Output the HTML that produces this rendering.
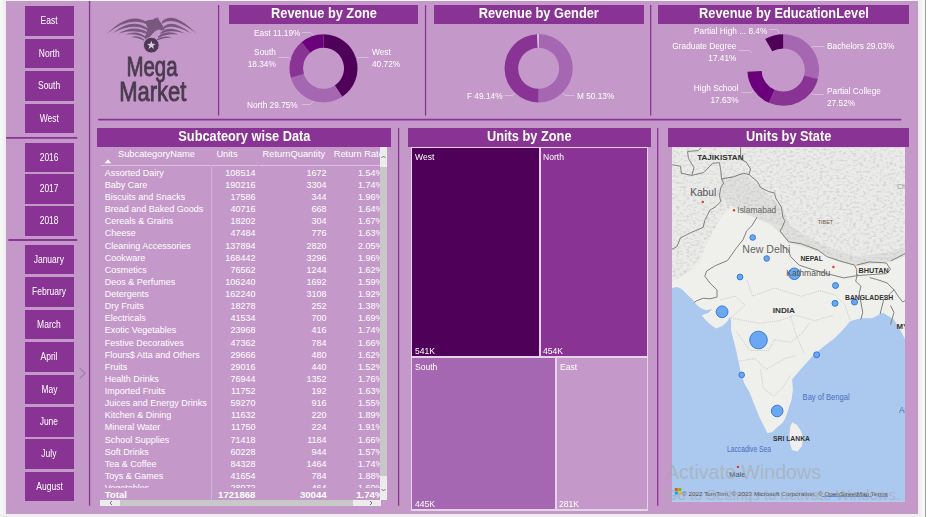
<!DOCTYPE html>
<html><head><meta charset="utf-8">
<style>
*{margin:0;padding:0;box-sizing:border-box}
html,body{width:931px;height:517px;overflow:hidden;background:#f4f5f2;font-family:"Liberation Sans",sans-serif}
.a{position:absolute}
#shadowL{left:0;top:0;width:6px;height:517px;background:linear-gradient(to right,#fafafa,#ececec)}
#shadowB{left:0;top:514px;width:931px;height:3px;background:#efefef}
#bg{left:6px;top:1px;width:912px;height:513px;background:#c499c9}
#rstrip{left:918px;top:0;width:7px;height:517px;background:linear-gradient(to right,#ececec,#fafafa)}
#rline{left:925px;top:0;width:1px;height:517px;background:#a0a0a0}
.btn{position:absolute;left:24.6px;width:49px;height:29.6px;background:#893494;color:#fff;font-size:10px;text-align:center;line-height:29px;white-space:nowrap}
.btn span{display:inline-block;transform:scaleX(.85)}
.ttl{position:absolute;background:#893494;color:#fff;font-weight:bold;font-size:14px;text-align:center;height:19px;line-height:16px}
.ttl span{display:inline-block;transform:scaleX(.913)}
.lbl{position:absolute;color:#fff;font-size:9.4px;white-space:nowrap;line-height:12.5px;transform:scaleX(.885);transform-origin:0 0}
.lbl.r{text-align:right;transform-origin:100% 0}

.tr{position:absolute;left:0;width:300px;height:12px;line-height:12px;font-size:9px;color:#fff;white-space:nowrap}
.tr span{position:absolute;top:0}
.c0{left:7.7px}
.c1{right:141.6px}
.c2{right:70.4px}
.c3{right:13.6px}
.th{position:absolute;font-size:9.3px;color:#fff;white-space:nowrap;line-height:12px}

.tm{position:absolute}
.tml{position:absolute;color:#fff;font-size:9.5px;line-height:12px;white-space:nowrap;transform:scaleX(.9);transform-origin:0 0}
</style></head><body>
<div class="a" id="shadowL"></div>
<div class="a" id="bg"></div>
<div class="a" id="shadowB"></div>
<div class="a" id="rstrip"></div>
<div class="a" id="rline"></div>
<div class="a" style="left:926px;top:0;width:5px;height:517px;background:#fff"></div>

<!-- left slicers -->
<div class="btn" style="top:6.1px"><span>East</span></div>
<div class="btn" style="top:38.9px"><span>North</span></div>
<div class="btn" style="top:71.2px"><span>South</span></div>
<div class="btn" style="top:103.7px"><span>West</span></div>
<div class="btn" style="top:142.6px"><span>2016</span></div>
<div class="btn" style="top:174.3px"><span>2017</span></div>
<div class="btn" style="top:206.1px"><span>2018</span></div>
<div class="btn" style="top:244.6px"><span>January</span></div>
<div class="btn" style="top:277.3px"><span>February</span></div>
<div class="btn" style="top:309.7px"><span>March</span></div>
<div class="btn" style="top:342.2px"><span>April</span></div>
<div class="btn" style="top:374.6px"><span>May</span></div>
<div class="btn" style="top:407px"><span>June</span></div>
<div class="btn" style="top:439.4px"><span>July</span></div>
<div class="btn" style="top:471.6px"><span>August</span></div>


<!-- lines -->
<svg class="a" style="left:0;top:0" width="931" height="517">
<g stroke="#893494" stroke-width="1.3">
<line x1="89.55" y1="1" x2="89.55" y2="505.8"/>
<line x1="218.6" y1="5" x2="218.6" y2="115.6"/>
<line x1="425.55" y1="5" x2="425.55" y2="115.6"/>
<line x1="650.7" y1="5" x2="650.7" y2="115.6"/>
<line x1="398.6" y1="128" x2="398.6" y2="505.7"/>
<line x1="657.7" y1="128" x2="657.7" y2="505.7"/>
</g>
<g stroke="#893494" stroke-width="1.8" stroke-linecap="round">
<line x1="6.9" y1="137.85" x2="76.6" y2="137.85"/>
<line x1="9" y1="240" x2="76.6" y2="240"/>
<line x1="98.8" y1="119.6" x2="900.5" y2="119.6"/>
</g>
<polyline points="79.6,368.1 85.2,373.3 79.6,378.6" fill="none" stroke="#7a7690" stroke-width="1"/>
</svg>


<!-- titles -->
<div class="ttl" style="left:229px;top:5px;width:189px"><span>Revenue by Zone</span></div>
<div class="ttl" style="left:434px;top:5px;width:210px"><span>Revenue by Gender</span></div>
<div class="ttl" style="left:658px;top:5px;width:251px"><span>Revenue by EducationLevel</span></div>

<div class="ttl" style="left:97px;top:128px;width:294px"><span>Subcateory wise Data</span></div>
<div class="ttl" style="left:408px;top:128px;width:243px"><span>Units by Zone</span></div>
<div class="ttl" style="left:668px;top:128px;width:241px"><span>Units by State</span></div>



<svg class="a" style="left:0;top:0" width="931" height="517" viewBox="0 0 931 517">
<path d="M323.50,34.30 A34,34 0 0 1 342.22,96.68 L334.79,85.41 A20.5,20.5 0 0 0 323.50,47.80Z" fill="#4f0058"/>
<path d="M342.22,96.68 A34,34 0 0 1 290.87,77.85 L303.82,74.06 A20.5,20.5 0 0 0 334.79,85.41Z" fill="#a567b1"/>
<path d="M290.87,77.85 A34,34 0 0 1 301.52,42.36 L310.25,52.66 A20.5,20.5 0 0 0 303.82,74.06Z" fill="#893494"/>
<path d="M301.52,42.36 A34,34 0 0 1 323.50,34.30 L323.50,47.80 A20.5,20.5 0 0 0 310.25,52.66Z" fill="#6a017a"/>
<path d="M538.70,34.10 A34.2,34.2 0 1 1 538.42,102.50 L538.53,88.80 A20.5,20.5 0 1 0 538.70,47.80Z" fill="#a567b1"/>
<path d="M538.42,102.50 A34.2,34.2 0 0 1 537.13,34.14 L537.76,47.82 A20.5,20.5 0 0 0 538.53,88.80Z" fill="#893494"/>
<path d="M537.13,34.14 A34.2,34.2 0 0 1 538.70,34.10 L538.70,47.80 A20.5,20.5 0 0 0 537.76,47.82Z" fill="#e2cfe6"/>
<path d="M783.20,34.20 A35.8,35.8 0 0 1 817.86,78.97 L804.11,75.41 A21.6,21.6 0 0 0 783.20,48.40Z" fill="#a567b1"/>
<path d="M817.86,78.97 A35.8,35.8 0 0 1 768.88,102.81 L774.56,89.80 A21.6,21.6 0 0 0 804.11,75.41Z" fill="#893494"/>
<path d="M768.88,102.81 A35.8,35.8 0 0 1 747.45,71.84 L761.63,71.11 A21.6,21.6 0 0 0 774.56,89.80Z" fill="#6a017a"/>
<path d="M765.15,39.08 A35.8,35.8 0 0 1 783.18,34.20 L783.19,48.40 A21.6,21.6 0 0 0 772.31,51.35Z" fill="#4f0058"/>

<g stroke="#d6bcdb" stroke-width="1" fill="none">
<polyline points="302,32.5 310.5,32.5 313,35"/>
<polyline points="278,57.5 289,57.5 291,59.5"/>
<polyline points="368.5,57.5 357.5,57.5"/>
<polyline points="302,104.5 310.5,104.5 313,101.5"/>
<polyline points="503.5,95.5 512.5,95.5 514.5,93"/>
<polyline points="574.5,95.5 565,95.5 563,93"/>
<polyline points="769,29.5 777.5,29.5 779,33"/>
<polyline points="738.5,50.5 750,50.5 752,53"/>
<polyline points="741.5,92.5 751.5,92.5 753,91"/>
<polyline points="824,46.5 812.5,46.5 811,48"/>
<polyline points="824,94.5 812.5,94.5 811,93"/>
</g>
</svg>

<div class="lbl" style="left:254px;top:26.6px">East 11.19%</div>
<div class="lbl r" style="right:655px;top:45.5px;text-align:right">South<br>18.34%</div>
<div class="lbl" style="left:371.5px;top:45.5px">West<br>40.72%</div>
<div class="lbl" style="left:247.3px;top:98.6px">North 29.75%</div>
<div class="lbl" style="left:466.5px;top:90.3px">F 49.14%</div>
<div class="lbl" style="left:577.4px;top:90.3px">M 50.13%</div>
<div class="lbl" style="left:694.4px;top:24.5px">Partial High ... 8.4%</div>
<div class="lbl r" style="right:194.6px;top:39.8px;text-align:right">Graduate Degree<br>17.41%</div>
<div class="lbl r" style="right:192.5px;top:81.6px;text-align:right">High School<br>17.63%</div>
<div class="lbl" style="left:826.9px;top:39.8px">Bachelors 29.03%</div>
<div class="lbl" style="left:826.9px;top:84.8px">Partial College<br>27.52%</div>
<div class="a" style="left:97px;top:147px;width:283px;height:341px;overflow:hidden">
<div class="tr" style="top:19.88px"><span class="c0">Assorted Dairy</span><span class="c1">108514</span><span class="c2">1672</span><span class="c3">1.54%</span></div>
<div class="tr" style="top:32.00px"><span class="c0">Baby Care</span><span class="c1">190216</span><span class="c2">3304</span><span class="c3">1.74%</span></div>
<div class="tr" style="top:44.12px"><span class="c0">Biscuits and Snacks</span><span class="c1">17586</span><span class="c2">344</span><span class="c3">1.96%</span></div>
<div class="tr" style="top:56.24px"><span class="c0">Bread and Baked Goods</span><span class="c1">40716</span><span class="c2">668</span><span class="c3">1.64%</span></div>
<div class="tr" style="top:68.36px"><span class="c0">Cereals &amp; Grains</span><span class="c1">18202</span><span class="c2">304</span><span class="c3">1.67%</span></div>
<div class="tr" style="top:80.48px"><span class="c0">Cheese</span><span class="c1">47484</span><span class="c2">776</span><span class="c3">1.63%</span></div>
<div class="tr" style="top:92.60px"><span class="c0">Cleaning Accessories</span><span class="c1">137894</span><span class="c2">2820</span><span class="c3">2.05%</span></div>
<div class="tr" style="top:104.72px"><span class="c0">Cookware</span><span class="c1">168442</span><span class="c2">3296</span><span class="c3">1.96%</span></div>
<div class="tr" style="top:116.84px"><span class="c0">Cosmetics</span><span class="c1">76562</span><span class="c2">1244</span><span class="c3">1.62%</span></div>
<div class="tr" style="top:128.96px"><span class="c0">Deos &amp; Perfumes</span><span class="c1">106240</span><span class="c2">1692</span><span class="c3">1.59%</span></div>
<div class="tr" style="top:141.08px"><span class="c0">Detergents</span><span class="c1">162240</span><span class="c2">3108</span><span class="c3">1.92%</span></div>
<div class="tr" style="top:153.20px"><span class="c0">Dry Fruits</span><span class="c1">18278</span><span class="c2">252</span><span class="c3">1.38%</span></div>
<div class="tr" style="top:165.32px"><span class="c0">Electricals</span><span class="c1">41534</span><span class="c2">700</span><span class="c3">1.69%</span></div>
<div class="tr" style="top:177.44px"><span class="c0">Exotic Vegetables</span><span class="c1">23968</span><span class="c2">416</span><span class="c3">1.74%</span></div>
<div class="tr" style="top:189.56px"><span class="c0">Festive Decoratives</span><span class="c1">47362</span><span class="c2">784</span><span class="c3">1.66%</span></div>
<div class="tr" style="top:201.68px"><span class="c0">Flours$ Atta and Others</span><span class="c1">29666</span><span class="c2">480</span><span class="c3">1.62%</span></div>
<div class="tr" style="top:213.80px"><span class="c0">Fruits</span><span class="c1">29016</span><span class="c2">440</span><span class="c3">1.52%</span></div>
<div class="tr" style="top:225.92px"><span class="c0">Health Drinks</span><span class="c1">76944</span><span class="c2">1352</span><span class="c3">1.76%</span></div>
<div class="tr" style="top:238.04px"><span class="c0">Imported Fruits</span><span class="c1">11752</span><span class="c2">192</span><span class="c3">1.63%</span></div>
<div class="tr" style="top:250.16px"><span class="c0">Juices and Energy Drinks</span><span class="c1">59270</span><span class="c2">916</span><span class="c3">1.55%</span></div>
<div class="tr" style="top:262.28px"><span class="c0">Kitchen &amp; Dining</span><span class="c1">11632</span><span class="c2">220</span><span class="c3">1.89%</span></div>
<div class="tr" style="top:274.40px"><span class="c0">Mineral Water</span><span class="c1">11750</span><span class="c2">224</span><span class="c3">1.91%</span></div>
<div class="tr" style="top:286.52px"><span class="c0">School Supplies</span><span class="c1">71418</span><span class="c2">1184</span><span class="c3">1.66%</span></div>
<div class="tr" style="top:298.64px"><span class="c0">Soft Drinks</span><span class="c1">60228</span><span class="c2">944</span><span class="c3">1.57%</span></div>
<div class="tr" style="top:310.76px"><span class="c0">Tea &amp; Coffee</span><span class="c1">84328</span><span class="c2">1464</span><span class="c3">1.74%</span></div>
<div class="tr" style="top:322.88px"><span class="c0">Toys &amp; Games</span><span class="c1">41654</span><span class="c2">784</span><span class="c3">1.88%</span></div>
<div class="tr" style="top:335.00px"><span class="c0">Vegetables</span><span class="c1">28072</span><span class="c2">464</span><span class="c3">1.60%</span></div>
</div>
<div class="th" style="left:118px;top:148px">SubcategoryName</div>
<div class="th" style="left:216.4px;top:148px">Units</div>
<div class="th" style="left:262.6px;top:148px">ReturnQuantity</div>
<div class="a" style="left:333.7px;top:147px;width:46.4px;height:14px;overflow:hidden"><div class="th" style="left:0;top:1px">Return Rate</div></div>
<svg class="a" style="left:104px;top:159px" width="8" height="5"><polygon points="0.7,4.3 7.2,4.3 3.95,0.6" fill="#fff"/></svg>
<div class="a" style="left:101px;top:165px;width:110px;height:1px;background:#dcc3e0"></div><div class="a" style="left:212px;top:165px;width:46px;height:1px;background:#dcc3e0"></div>
<div class="a" style="left:259px;top:165px;width:121px;height:1px;background:#dcc3e0"></div>
<div class="a" style="left:211px;top:166px;width:1px;height:334px;background:#d2b3d8"></div>
<div class="a" style="left:97px;top:487.7px;width:283px;height:12px;overflow:hidden"><div class="tr" style="top:1.1px;font-weight:bold;font-size:9.6px"><span class="c0">Total</span><span class="c1">1721868</span><span class="c2">30044</span><span class="c3">1.74%</span></div></div>
<!-- scrollbars -->
<div class="a" style="left:380px;top:147px;width:7px;height:353px;background:#ececec"></div>
<div class="a" style="left:380px;top:166.5px;width:7px;height:309px;background:#c8c8c8"></div>
<div class="a" style="left:100px;top:500px;width:280.7px;height:6px;background:#ececec"></div>
<div class="a" style="left:119.5px;top:500px;width:233px;height:6px;background:#c8c8c8"></div>
<svg class="a" style="left:380px;top:147px" width="7" height="353">
<polyline points="1.5,11 3.5,9 5.5,11" fill="none" stroke="#555" stroke-width="0.8"/>
<polyline points="1.5,342 3.5,344 5.5,342" fill="none" stroke="#555" stroke-width="0.8"/>
</svg>
<svg class="a" style="left:100px;top:500px" width="281" height="6">
<polyline points="12,1 10,3 12,5" fill="none" stroke="#555" stroke-width="0.8"/>
<polyline points="270,1 272,3 270,5" fill="none" stroke="#555" stroke-width="0.8"/>
</svg>

<!-- treemap -->
<div class="a" style="left:411px;top:147px;width:237px;height:364px;background:#e6d3e9"></div>
<div class="tm" style="left:412px;top:148px;width:127px;height:208px;background:#4f0058"></div>
<div class="tm" style="left:540.6px;top:148px;width:106.4px;height:208px;background:#893494"></div>
<div class="tm" style="left:412px;top:358px;width:142.8px;height:151.3px;background:#a567b1"></div>
<div class="tm" style="left:556.8px;top:358px;width:90.2px;height:151.3px;background:#c499c9"></div>
<div class="tml" style="left:415px;top:150.8px">West</div>
<div class="tml" style="left:415px;top:344.8px">541K</div>
<div class="tml" style="left:543.3px;top:150.8px">North</div>
<div class="tml" style="left:543.3px;top:344.8px">454K</div>
<div class="tml" style="left:415px;top:360.6px">South</div>
<div class="tml" style="left:415px;top:497.6px">445K</div>
<div class="tml" style="left:560.2px;top:360.6px">East</div>
<div class="tml" style="left:559.4px;top:497.6px">281K</div>

<!-- logo -->
<svg class="a" style="left:100px;top:10px" width="105" height="50" viewBox="0 0 105 50">
<g fill="#79587f"><path d="M6.8,23.9 Q30.0,0.0 48.5,13.0 L48.5,15.2 Q30.0,5.2 6.8,23.9Z"/>
<path d="M12.4,23.3 Q32.0,7.4 47.4,18.2 L47.4,20.2 Q32.0,12.0 12.4,23.3Z"/>
<path d="M18.6,23.5 Q34.0,14.4 47.4,22.2 L47.4,24.0 Q34.0,18.6 18.6,23.5Z"/>
<path d="M25.4,24.6 Q37.0,19.2 46.0,27.0 L46.0,28.6 Q37.0,23.0 25.4,24.6Z"/>
<path d="M31.0,27.2 Q38.0,24.5 44.0,29.5 L44.0,30.7 Q38.0,27.3 31.0,27.2Z"/>
<path d="M96.8,23.9 Q73.0,0.0 62.0,11.5 L62.0,13.7 Q73.0,5.2 96.8,23.9Z"/>
<path d="M91.0,23.3 Q71.0,7.4 62.5,18.0 L62.5,20.0 Q71.0,12.0 91.0,23.3Z"/>
<path d="M85.0,23.5 Q69.0,14.4 60.5,22.5 L60.5,24.3 Q69.0,18.6 85.0,23.5Z"/>
<path d="M78.5,24.6 Q67.0,19.2 58.0,26.5 L58.0,28.1 Q67.0,23.0 78.5,24.6Z"/>
<path d="M72.0,27.5 Q64.0,24.8 56.0,29.5 L56.0,30.7 Q64.0,27.6 72.0,27.5Z"/>
<path d="M44,11.5 L49,10 L53,9.6 L56,7.6 L57,8.8 L57.8,7.1 L59,10 L61.5,13.5 L63.5,17 L64.7,19.8 L62,20.6 L58.5,19.6 L55,21.2 L52,24.2 L49,28 L46.5,30.5 L44.5,27.5 L46.5,23 L47.5,18 L46,14 Z"/>
</g>
<circle cx="51.3" cy="35.2" r="7.9" fill="#4e3954" stroke="#c499c9" stroke-width="1"/>
<polygon points="51.3,30.8 52.4,33.8 55.5,33.9 53.1,35.8 54,38.9 51.3,37.1 48.6,38.9 49.5,35.8 47.1,33.9 50.2,33.8" fill="#dccbe0"/>
</svg>
<div class="a" style="left:107px;top:53.3px;width:90px;text-align:center;font-size:28px;line-height:27px;color:#4b3a50;white-space:nowrap;-webkit-text-stroke:0.9px #4b3a50"><span style="display:inline-block;transform:scaleX(.73)">Mega</span></div>
<div class="a" style="left:107.5px;top:77.8px;width:90px;text-align:center;font-size:28px;line-height:27px;color:#4b3a50;white-space:nowrap;-webkit-text-stroke:0.9px #4b3a50"><span style="display:inline-block;transform:scaleX(.785)">Market</span></div>
<!-- map -->
<svg class="a" style="left:0;top:0" width="931" height="517" viewBox="0 0 931 517">
<defs><clipPath id="mc"><rect x="672" y="147.4" width="233" height="354.4"/></clipPath></defs>
<g clip-path="url(#mc)">
<rect x="671" y="147" width="235" height="356" fill="#efefec"/>
<polygon points="671.0,147.0 906.0,147.0 906.0,253.0 890.6,260.9 869.4,261.9 856.6,265.1 839.6,260.9 818.3,250.2 801.3,243.8 788.5,241.7 780.0,231.0 770.0,222.0 757.1,217.0 746.0,212.0 735.0,205.0 722.0,215.0 706.0,245.0 700.0,262.0 690.0,272.0 672.0,282.0" fill="#ebebe9"/>
<polygon points="721.5,178.9 743.4,173.2 760.4,187.4 781.5,207.1 790.0,225.0 805.0,235.0 830.0,248.0 856.0,257.0 890.0,252.0 906.0,247.0 906.0,256.0 890.6,262.0 856.6,266.0 839.6,262.0 818.3,252.0 801.3,246.0 788.5,243.0 780.0,233.0 770.0,224.0 757.0,219.0 744.0,213.0 730.0,205.0 720.0,195.0" fill="#e0e0de"/>
<filter id="tx" x="0" y="0" width="100%" height="100%"><feTurbulence type="fractalNoise" baseFrequency="0.3 0.45" numOctaves="2" seed="7"/><feColorMatrix type="matrix" values="0 0 0 0 0.4  0 0 0 0 0.4  0 0 0 0 0.4  0 0 0 -3 1.6"/></filter>
<clipPath id="mtnc"><polygon points="671.0,147.0 906.0,147.0 906.0,253.0 890.6,260.9 869.4,261.9 856.6,265.1 839.6,260.9 818.3,250.2 801.3,243.8 788.5,241.7 780.0,231.0 770.0,222.0 757.1,217.0 746.0,212.0 735.0,205.0 722.0,215.0 706.0,245.0 700.0,262.0 690.0,272.0 672.0,282.0"/></clipPath>
<rect x="671" y="147" width="235" height="140" filter="url(#tx)" clip-path="url(#mtnc)" opacity="0.35"/>
<polygon points="671.0,288.2 677.0,286.9 681.4,288.8 684.6,292.0 688.4,295.7 692.1,298.9 694.6,302.6 697.2,305.2 700.9,308.3 706.0,310.2 712.3,308.9 708.5,312.7 701.6,315.2 704.7,319.0 709.7,324.0 716.0,328.4 722.3,325.9 727.3,321.5 729.9,316.5 731.1,321.5 731.1,330.3 733.0,337.9 734.9,345.0 736.7,353.0 740.4,370.6 744.2,383.2 749.4,392.0 754.2,404.2 759.0,416.3 763.9,426.0 767.5,433.2 772.3,432.0 777.2,427.2 782.0,423.5 784.4,420.0 786.9,413.9 789.3,406.6 791.7,399.4 792.9,389.7 792.2,379.2 801.7,368.3 812.5,356.2 823.3,346.7 834.2,338.5 842.3,330.4 850.4,321.0 861.3,318.2 872.0,318.2 883.0,312.8 893.8,319.6 900.5,330.4 906.0,341.3 906.0,503.0 671.0,503.0" fill="#abc8ef"/>
<polygon points="792.4,422.3 797.0,425.0 801.0,431.0 803.0,438.0 802.0,446.0 797.5,451.5 792.0,450.0 790.0,443.0 789.5,433.0 790.5,426.0" fill="#efefec"/>
<g fill="none" stroke="#c4c4c4" stroke-width="0.8" stroke-dasharray="1.2 1"><polyline points="730.8,317.9 744.4,320.6 760.6,323.3 779.6,320.6 795.8,315.2 814.8,320.6 833.7,315.2"/><polyline points="736.2,331.4 749.8,350.4 768.7,350.4 774.2,339.6 790.4,342.3 801.2,334.2 809.4,323.3"/><polyline points="739.0,361.2 755.2,358.5 766.0,369.4 785.0,358.5 795.8,355.8"/><polyline points="760.6,369.4 763.3,388.3 774.2,396.4 782.3,388.3 790.4,374.8"/><polyline points="747.0,280.0 752.5,296.2 774.2,288.1 801.2,296.2 820.2,290.8"/><polyline points="790.4,315.2 795.8,334.2 804.0,353.1"/><polyline points="720.0,300.0 735.0,296.0 745.0,305.0 730.8,317.9"/><polyline points="820.0,290.8 835.0,295.0 845.0,305.0 850.0,320.0"/></g>
<g fill="none" stroke="#808080" stroke-width="1" stroke-linejoin="round"><polyline points="672.1,164.8 680.6,166.2 681.3,173.2 691.9,175.4 694.0,167.6 688.4,158.4 687.6,151.4 698.2,150.6 701.0,147.8"/><polyline points="691.9,175.4 703.9,172.5 712.4,163.4 719.4,162.6 720.8,170.4 721.5,178.9 733.5,176.8 743.4,173.2 749.1,174.6 750.5,169.0 746.2,162.0 740.6,159.1 740.6,147.0"/><polyline points="721.5,178.9 723.6,183.1 720.8,187.4 719.4,195.8 720.8,201.5 715.2,207.1 710.0,210.0 704.8,220.4 703.1,227.4 690.9,232.6 680.4,237.9 677.0,246.6 672.0,249.2"/><polyline points="749.1,174.6 757.5,181.7 760.4,187.4 768.8,191.6 774.5,193.0 775.9,198.6 781.5,207.1 783.0,218.0 785.0,220.4 782.0,228.0 780.0,231.0"/><polyline points="757.1,217.0 751.9,225.7 746.6,230.9 743.1,239.6 736.2,248.3 727.5,260.5 715.3,265.7 706.6,271.0 704.8,276.2 710.0,283.1 717.0,290.1 717.0,297.1 710.0,298.8 703.4,298.2 696.5,300.8 694.0,302.6"/><polyline points="780.0,231.0 788.5,241.7 801.3,243.8 818.3,250.2 826.8,256.6 839.6,260.9 854.5,265.1 856.6,269.4 856.6,275.7 843.8,277.9 826.8,273.6 811.9,269.4 799.1,265.1 790.6,256.6 788.5,250.2 780.0,243.8"/><polyline points="856.6,265.1 869.4,261.9 886.4,263.0 890.6,269.4 886.4,273.6 869.4,274.7 856.6,275.7"/><polyline points="890.6,260.9 903.4,254.5 906.0,253.0"/><polyline points="857.4,274.1 855.7,281.1 860.9,286.3 859.2,293.3 860.9,302.0 862.7,312.4 860.9,319.4"/><polyline points="869.6,277.6 876.6,279.4 887.0,282.9 894.0,289.8 890.5,293.3 883.6,300.3 881.8,307.2 880.1,314.2"/><polyline points="894.0,289.8 898.0,296.0 902.7,302.0 906.0,300.0"/><polyline points="890.5,305.5 894.0,312.4 890.5,324.6"/></g>
<g fill="#6aa9f1" stroke="#2d72d6" stroke-width="0.9"><circle cx="752.7" cy="237.5" r="2.8"/><circle cx="766.7" cy="258.5" r="2.8"/><circle cx="740" cy="277" r="2.9"/><circle cx="794.3" cy="273.8" r="5.8"/><circle cx="835.5" cy="285.5" r="3"/><circle cx="722.1" cy="311.8" r="5.9"/><circle cx="835" cy="303.3" r="3"/><circle cx="854.5" cy="302" r="3"/><circle cx="758.5" cy="340" r="8.8"/><circle cx="741.7" cy="374.9" r="2.8"/><circle cx="816.6" cy="354.8" r="3"/><circle cx="777.2" cy="411" r="5.8"/></g>
<g fill="#e03a2a"><circle cx="702.8" cy="201.9" r="1.2"/><circle cx="734" cy="210.3" r="1.2"/><circle cx="833.4" cy="267" r="1.2"/><circle cx="737.9" cy="466.9" r="1.2"/></g>
<g font-family="Liberation Sans" fill="#333">
<text x="697.2" y="159.5" font-size="7.2" font-weight="bold" textLength="46.3" lengthAdjust="spacingAndGlyphs">TAJIKISTAN</text>
<text x="690.2" y="195.8" font-size="10.5" fill="#555" textLength="26" lengthAdjust="spacingAndGlyphs">Kabul</text>
<text x="737.3" y="213" font-size="8.5" fill="#666" textLength="39" lengthAdjust="spacingAndGlyphs">Islamabad</text>
<text x="817.7" y="223.5" font-size="6" fill="#6d5545" textLength="15.5" lengthAdjust="spacingAndGlyphs">TIBET</text>
<text x="742.3" y="253.2" font-size="11" fill="#666" textLength="48" lengthAdjust="spacingAndGlyphs">New Delhi</text>
<text x="800.4" y="261.2" font-size="7.2" font-weight="bold" textLength="22.4" lengthAdjust="spacingAndGlyphs">NEPAL</text>
<text x="786.3" y="276.4" font-size="8.5" fill="#555" textLength="44" lengthAdjust="spacingAndGlyphs">Kathmandu</text>
<text x="858.4" y="273" font-size="7.2" font-weight="bold" textLength="30.3" lengthAdjust="spacingAndGlyphs">BHUTAN</text>
<text x="845" y="299.8" font-size="7.2" font-weight="bold" textLength="48.2" lengthAdjust="spacingAndGlyphs">BANGLADESH</text>
<text x="772.7" y="312.6" font-size="7.8" font-weight="bold" textLength="22.3" lengthAdjust="spacingAndGlyphs">INDIA</text>
<text x="896.5" y="329.4" font-size="7.8" font-weight="bold">MY</text>
<text x="897" y="189" font-size="7" fill="#999">Ch</text>
<text x="773" y="440.7" font-size="7.2" font-weight="bold" textLength="37" lengthAdjust="spacingAndGlyphs">SRI LANKA</text>
<text x="802.6" y="400.3" font-size="8.3" fill="#4a6fc0" textLength="47" lengthAdjust="spacingAndGlyphs">Bay of Bengal</text>
<text x="727" y="452.3" font-size="8.3" fill="#4a6fc0" textLength="44" lengthAdjust="spacingAndGlyphs">Laccadive Sea</text>
<text x="899" y="413" font-size="8.3" fill="#4a6fc0">Ar</text>
<text x="729.3" y="476.5" font-size="8" fill="#555" textLength="16" lengthAdjust="spacingAndGlyphs">Male</text>
<g><rect x="674.8" y="488" width="3" height="3" fill="#f25022"/><rect x="678.3" y="488" width="3" height="3" fill="#7fba00"/><rect x="674.8" y="491.5" width="3" height="3" fill="#00a4ef"/><rect x="678.3" y="491.5" width="3" height="3" fill="#ffb900"/></g>
<text x="682" y="495.5" font-size="5.6" fill="#444" textLength="206" lengthAdjust="spacingAndGlyphs">© 2022 TomTom, © 2023 Microsoft Corporation, © OpenStreetMap  Terms</text>
<line x1="822" y1="496.5" x2="872" y2="496.5" stroke="#3060c0" stroke-width="0.6"/>
<line x1="878" y1="496.5" x2="888" y2="496.5" stroke="#3060c0" stroke-width="0.6"/>
</g>
</g>
<g font-family="Liberation Sans" fill="#a8a8a8" fill-opacity="0.6">
<text x="666" y="478.7" font-size="19.5" textLength="155" lengthAdjust="spacingAndGlyphs">Activate Windows</text>
<text x="666" y="500.2" font-size="14.5" textLength="234" lengthAdjust="spacingAndGlyphs">Go to Settings to activate Windows.</text>
</g>
</svg>

</body></html>
